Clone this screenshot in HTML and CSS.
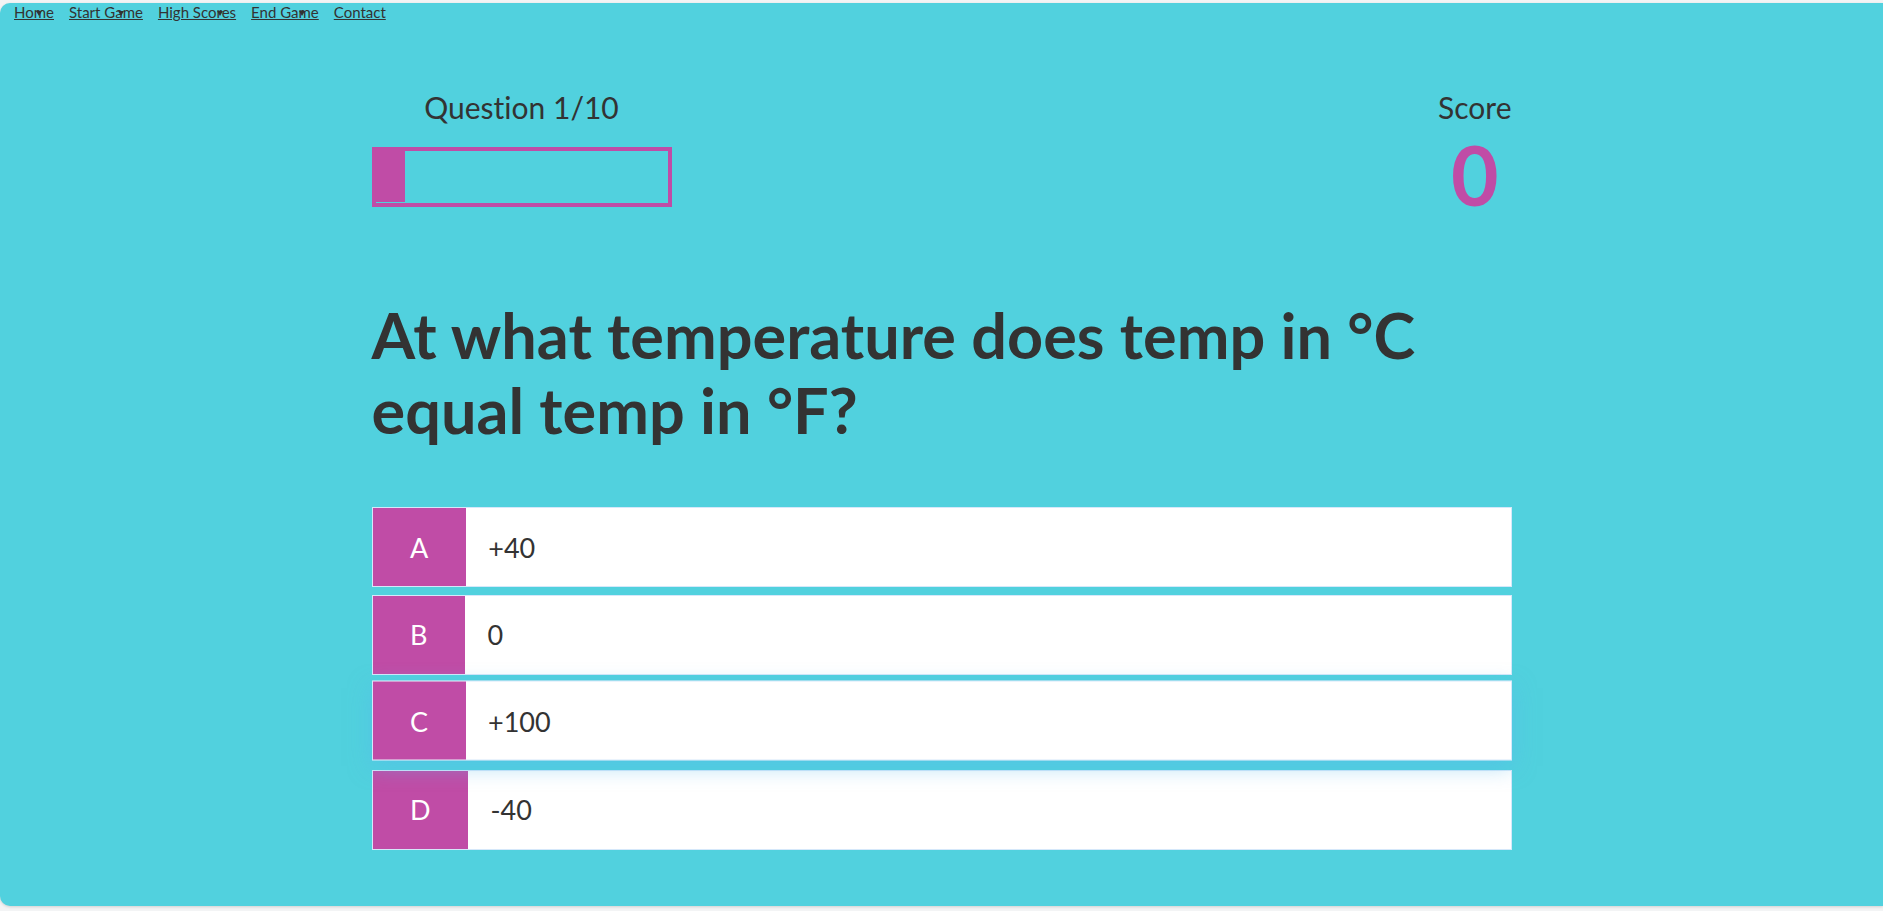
FILE: index.html
```html
<!DOCTYPE html>
<html lang="en">
<head>
<meta charset="utf-8">
<title>Quiz Game</title>
<link rel="stylesheet" href="styles.css">
</head>
<body>
<div class="page">
  <nav class="nav">
    <a href="#" class="nav-link mark-home">Home<span class="mark"></span></a>
    <a href="#" class="nav-link mark-start">Start Game<span class="mark"></span></a>
    <a href="#" class="nav-link mark-high">High Scores<span class="mark"></span></a>
    <a href="#" class="nav-link mark-end">End Game<span class="mark"></span></a>
    <a href="#" class="nav-link">Contact</a>
  </nav>
  <main class="container">
    <div class="hud">
      <div class="hud-item">
        <p class="hud-prefix">Question 1/10</p>
        <div class="progress-bar"><div class="progress-fill" style="width: 10%"></div></div>
      </div>
      <div class="hud-item">
        <p class="hud-prefix">Score</p>
        <h1 class="hud-main-text">0</h1>
      </div>
    </div>
    <h2 class="question">At what temperature does temp in °C equal temp in °F?</h2>
    <div class="choice-container">
      <p class="choice-prefix">A</p>
      <p class="choice-text">+40</p>
    </div>
    <div class="choice-container">
      <p class="choice-prefix">B</p>
      <p class="choice-text">0</p>
    </div>
    <div class="choice-container is-hover">
      <p class="choice-prefix">C</p>
      <p class="choice-text">+100</p>
    </div>
    <div class="choice-container">
      <p class="choice-prefix">D</p>
      <p class="choice-text">-40</p>
    </div>
  </main>
</div>
</body>
</html>
```

FILE: styles.css
```css
* {
  box-sizing: border-box;
  margin: 0;
  padding: 0;
}

html {
  font-size: 15px;
}

body {
  background: #f3f4f5;
  font-family: "Lato", "Open Sans", sans-serif;
  font-variant-ligatures: no-common-ligatures;
  color: #333;
  overflow: hidden;
  height: 911px;
}

.page {
  margin-top: 3px;
  height: 903px;
  background: #51d1de;
  border-radius: 10px 0 0 10px;
  box-shadow: 0 1px 3px rgba(0, 0, 0, 0.15);
}

.nav {
  display: flex;
  gap: 15px;
  padding: 0 14px;
  height: 18px;
}

.nav-link {
  position: relative;
  font-size: 15px;
  line-height: 18px;
  color: #333;
  text-decoration: underline;
}

.mark {
  position: absolute;
  top: 8px;
  width: 0;
  height: 0;
  border-left: 3.5px solid transparent;
  border-right: 3.5px solid transparent;
  border-top: 5px solid #333;
}

.mark-home .mark { left: 22px; }
.mark-start .mark { left: 49px; }
.mark-high .mark { left: 59px; }
.mark-end .mark { left: 48px; }

.container {
  max-width: 1200px;
  margin: 0 auto;
  padding: 68px 30px 30px;
}

.hud {
  display: flex;
  justify-content: space-between;
}

.hud-item {
  display: flex;
  flex-direction: column;
  align-items: center;
}

.hud-prefix {
  font-size: 30px;
  text-align: center;
  color: #333;
}

.progress-bar {
  width: 300px;
  height: 60px;
  border: 4px solid #c04ca6;
  margin-top: 22px;
}

.progress-fill {
  height: 51px;
  background: #c04ca6;
}

.hud-main-text {
  font-size: 82px;
  font-weight: 700;
  color: #c04ca6;
  text-align: center;
  margin-bottom: 74px;
}

.question {
  font-size: 63px;
  font-weight: 700;
  color: #333;
  margin-bottom: 60px;
  max-width: 1140px;
}

.choice-container {
  display: flex;
  width: 100%;
  font-size: 27px;
  background: #fff;
  border: 1px solid rgba(86, 165, 235, 0.25);
  margin-bottom: 7.5px;
}

.choice-container.is-hover {
  box-shadow: 0 6px 21px 0 rgba(86, 185, 235, 0.5);
  transform: translateY(-1.5px);
}

.choice-prefix {
  padding: 22.5px 37.5px;
  background: #c04ca6;
  color: #fff;
}

.choice-text {
  padding: 22.5px;
  width: 100%;
  color: #333;
}
```
